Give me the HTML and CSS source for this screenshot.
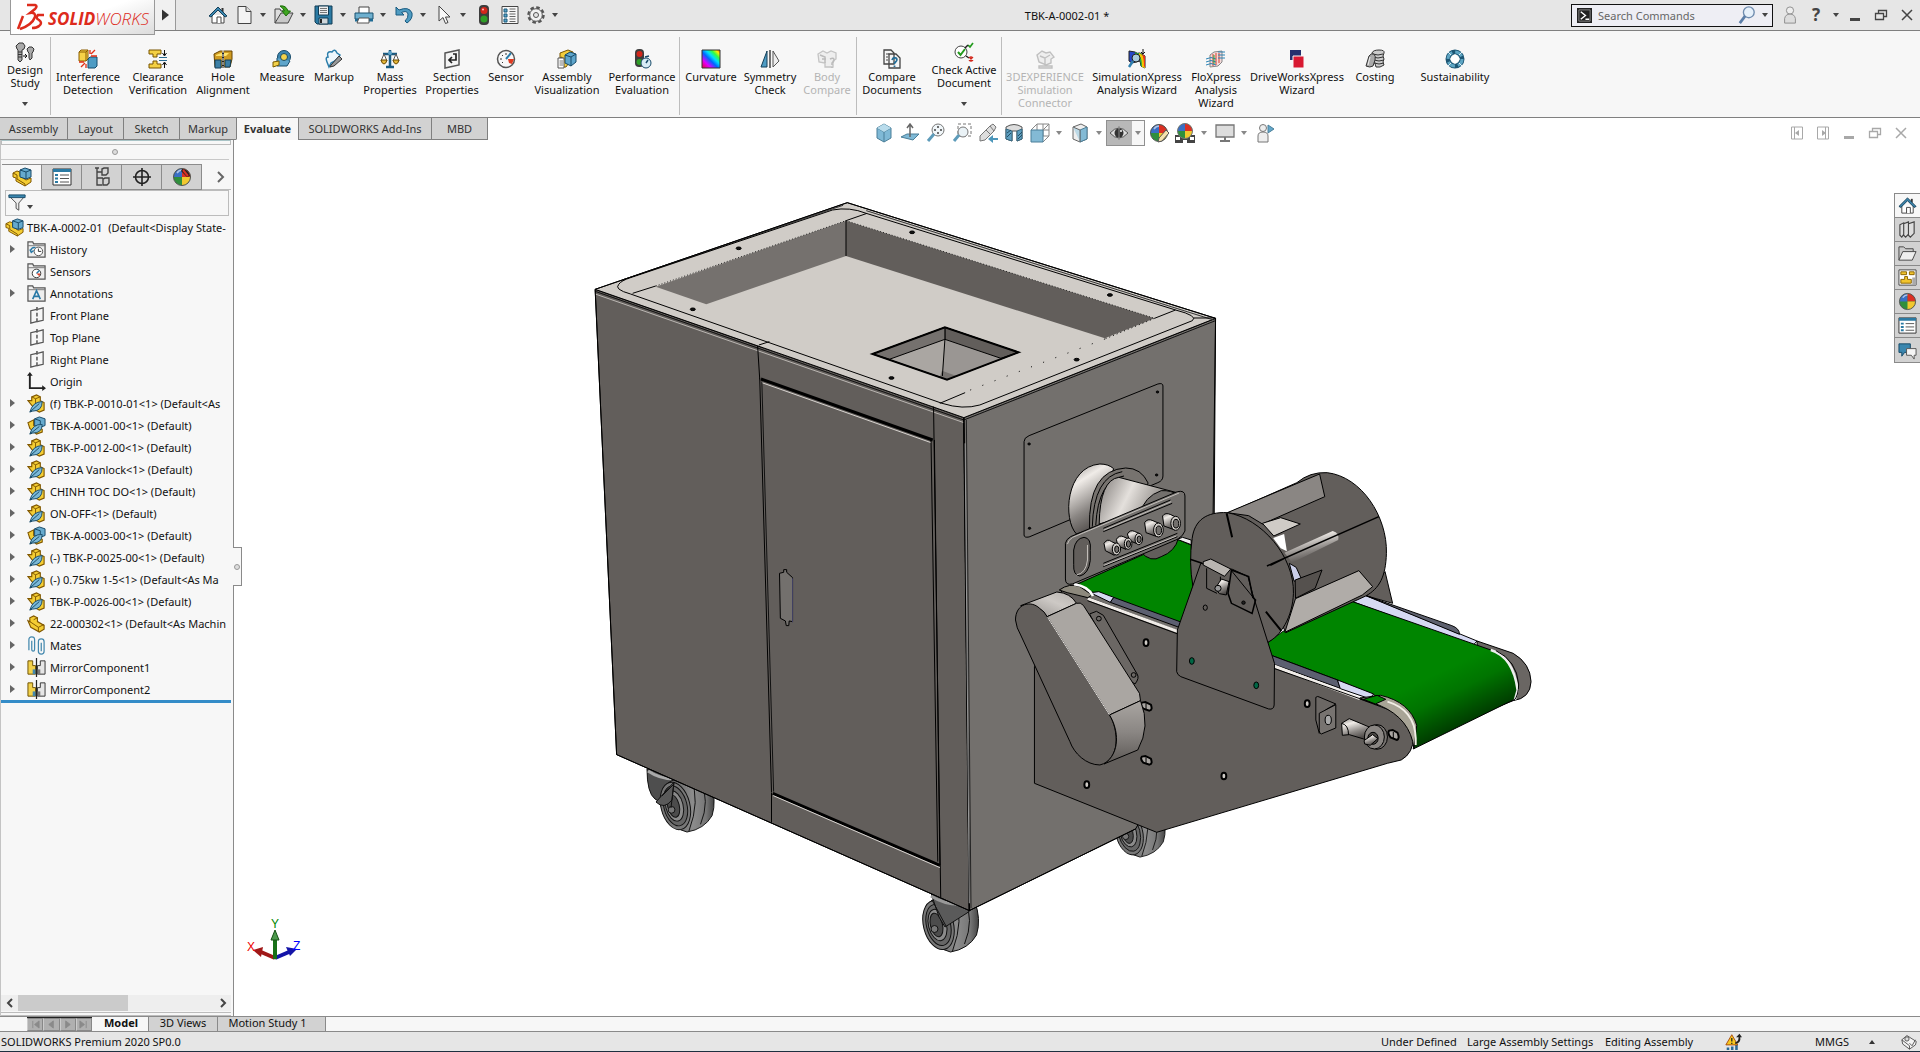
FILE: index.html
```html
<!DOCTYPE html>
<html lang="en">
<head>
<meta charset="utf-8">
<title>TBK-A-0002-01 - SOLIDWORKS</title>
<link rel="stylesheet" href="styles.css">
</head>
<body>
<svg class="defs" aria-hidden="true">
<defs>
<linearGradient id="metal" x1="0" y1="0" x2="0.4" y2="1"><stop offset="0" stop-color="#8e8a87"/><stop offset=".3" stop-color="#f0ece8"/><stop offset=".7" stop-color="#8a8683"/><stop offset="1" stop-color="#504c4a"/></linearGradient>
<linearGradient id="metalh" x1="0" y1="0" x2="1" y2="0.3"><stop offset="0" stop-color="#7e7a77"/><stop offset=".45" stop-color="#e4e0dc"/><stop offset="1" stop-color="#77736f"/></linearGradient>
<linearGradient id="bend" x1="0" y1="0" x2="0" y2="1"><stop offset="0" stop-color="#aaa6a2"/><stop offset=".5" stop-color="#8a8683"/><stop offset="1" stop-color="#5c5855"/></linearGradient>
<linearGradient id="bendtop" x1="0" y1="1" x2="1" y2="0"><stop offset="0" stop-color="#8f8b88"/><stop offset=".6" stop-color="#cdc9c5"/><stop offset="1" stop-color="#b5b1ad"/></linearGradient>
<linearGradient id="beltg" gradientUnits="userSpaceOnUse" x1="1270" y1="640" x2="1350" y2="800"><stop offset="0" stop-color="#008500"/><stop offset=".4" stop-color="#007400"/><stop offset="1" stop-color="#003800"/></linearGradient>
<linearGradient id="tyre"><stop offset="0" stop-color="#4b4b4b"/><stop offset=".6" stop-color="#8c8c8c"/><stop offset=".85" stop-color="#767676"/><stop offset="1" stop-color="#444"/></linearGradient>
<linearGradient id="rainbow" x1="0" y1="1" x2="1" y2="0"><stop offset="0" stop-color="#e03"/><stop offset=".25" stop-color="#d0f"/><stop offset=".45" stop-color="#06f"/><stop offset=".6" stop-color="#0df"/><stop offset=".75" stop-color="#3f4"/><stop offset=".88" stop-color="#fe0"/><stop offset="1" stop-color="#f40"/></linearGradient>
</defs>
<symbol id="home" viewBox="0 0 20 20"><path d="M4 10v8h12v-8" fill="#fff" stroke="#444"/><path d="M9 18v-6h4v6" fill="#fff" stroke="#444"/><path d="M14.500 3v4" stroke="#333" stroke-width="2"/><path d="M1 11l9-9 9 9-2 1-7-7-7 7z" fill="#3a86ae" stroke="#153f58"/></symbol>
<symbol id="new" viewBox="0 0 20 20"><path d="M4 1.500h8l5 5v12H4z" fill="#f4f4f4" stroke="#444"/><path d="M12 1.500v5h5" fill="#ddd" stroke="#444"/></symbol>
<symbol id="open" viewBox="0 0 20 20"><path d="M1 18V4h5l1 2h7v3" fill="#ddd" stroke="#444"/><path d="M1 18L7 8h12l-5 10z" fill="#c9c9c9" stroke="#444"/><path d="M6 1q6-1 8 5h2.500L12 11 8 6h2.500Q9 3 6 1z" fill="#3fa520" stroke="#1d6d0c"/></symbol>
<symbol id="save" viewBox="0 0 20 20"><path d="M1 1h17v18H3l-2-2z" fill="#2b7aa3" stroke="#123c55"/><path d="M4.500 1h10v9h-10z" fill="#eee" stroke="#123c55"/><path d="M6 3.500h7M6 5.500h7M6 7.500h7" stroke="#777"/><path d="M5 13h9v6H5z" fill="#cfd6da" stroke="#123c55"/><path d="M7 14v4" stroke="#222" stroke-width="2"/></symbol>
<symbol id="print" viewBox="0 0 20 20"><path d="M5 8V2h10v6" fill="#fff" stroke="#444"/><path d="M1 8h18v6H1z" fill="#6fb0cf" stroke="#1b5370"/><path d="M1 14h18v2.500H1z" fill="#1f6b94"/><path d="M5 13h10v5H3z" fill="#fff" stroke="#555"/></symbol>
<symbol id="undo" viewBox="0 0 20 20"><path d="M2 2v8h8L7.500 7.500Q13 5 14 9q.5 4-3 7l2 2q6-4 5-10Q15 1 5 5z" fill="#4f9cc2" stroke="#185a80"/></symbol>
<symbol id="cursor" viewBox="0 0 20 20"><path d="M5 1v15l4-3.500 2.500 6 2.500-1L11.500 12H16z" fill="#f8f8f8" stroke="#444"/></symbol>
<symbol id="traffic" viewBox="0 0 20 20"><rect x="5" y="0" width="10" height="20" rx="4" fill="#3d3d3d"/><circle cx="10" cy="5.500" r="3.500" fill="#d3271b"/><circle cx="10" cy="14" r="3.500" fill="#2f9e27"/><circle cx="9" cy="4.500" r="1" fill="#fbb"/></symbol>
<symbol id="list" viewBox="0 0 20 20"><path d="M2 1.500h16v17H2z" fill="#f7f7f7" stroke="#444"/><path d="M4 4h3v3H4zM4 9h3v3H4zM4 14h3v3H4z" fill="#5ba5c8" stroke="#1b5a7d"/><path d="M9.500 4h6M9.500 6.500h6M9.500 9h6M9.500 11.500h6M9.500 14h6M9.500 16.500h6" stroke="#666"/></symbol>
<symbol id="gear" viewBox="0 0 20 20"><circle cx="10" cy="10" r="7.500" fill="none" stroke="#555" stroke-width="2.500" stroke-dasharray="3.500 2.390"/><circle cx="10" cy="10" r="6.300" fill="#f2f2f2" stroke="#555"/><circle cx="10" cy="10" r="2.500" fill="#e6e6e6" stroke="#555"/></symbol>
<symbol id="screws" viewBox="0 0 20 20"><path d="M1 4l3-3h4l2 3-1 3-2 1v10l-2 2-2-2V8L2 7z" fill="#aaa" stroke="#333"/><path d="M3 10h4M3 12.500h4M3 15h4" stroke="#333"/><path d="M12 7l2-2h3l2 2-1 3-1 1v5l-2 2-1-2v-5l-1-1z" fill="#aaa" stroke="#333"/><path d="M8 14h4m-2-2l2 2-2 2" stroke="#111" fill="none"/></symbol>
<symbol id="interference" viewBox="0 0 20 20"><path d="M1 3l2-2h7v9l-2 2H1z" fill="#f6d348" stroke="#8a5d00"/><path d="M10 10l2-2h7v9l-2 2h-7z" fill="#4e9cc4" stroke="#144d6d"/><path d="M1 3h7v9M8 3l2-2" fill="none" stroke="#8a5d00"/><path d="M12 5V1M13 5l4-4M13 7h6M7 14l-4 4M8 15v4M6 13H1" stroke="#e22d12" stroke-width="1.300"/></symbol>
<symbol id="clearance" viewBox="0 0 20 20"><path d="M1 1h12v4H9v3H5V5H1zM1 19h12v-4H9v-3H5v3H1z" fill="#f4d044" stroke="#795500"/><path d="M11 8.500h8M11 11.500h8" stroke="#2a6c92"/><path d="M16.500 1v5m-2-2l2 3 2-3M16.500 19v-5m-2 2l2-3 2 3" stroke="#111" fill="none"/></symbol>
<symbol id="hole" viewBox="0 0 20 20"><path d="M1 5l6-3h12v8L17 18H2z" fill="#cf9b22" stroke="#694500"/><path d="M3 6l5-2h8l-3 3H3z" fill="#ffe36a"/><path d="M2 11h6v8H2zM12 11h6l-1 7h-5z" fill="#3c7fa5" stroke="#143f58"/><path d="M10 3v16" stroke="#222" stroke-width="2"/><path d="M10 1v18" stroke="#eee" stroke-dasharray="3 1"/></symbol>
<symbol id="measure" viewBox="0 0 20 20"><circle cx="12" cy="8" r="6.500" fill="#3d86b0" stroke="#174a68"/><path d="M5 9v8h10l3-5" fill="#5ea5cb" stroke="#174a68"/><circle cx="12" cy="8" r="3.500" fill="#f3d24a" stroke="#174a68"/><path d="M1 13l6-1v4l-6 2z" fill="#f3d24a" stroke="#7a5a00"/></symbol>
<symbol id="markup" viewBox="0 0 20 20"><path d="M3 13q-2-5 1-5-2-6 4-5 3-4 5 1l3 2q-2 5-9 8l-2 4z" fill="#eef7fc" stroke="#2b7daa" stroke-width="1.500"/><path d="M7 16l8-9 3 3-8 7-4 1z" fill="#999" stroke="#333"/></symbol>
<symbol id="mass" viewBox="0 0 20 20"><path d="M10 1v16M3 5h14M6 18h8" stroke="#1b5b81" stroke-width="2.500"/><circle cx="10" cy="4" r="2" fill="#5ea5cb"/><path d="M4 5l-3 7h6zM16 5l-3 7h6z" fill="#fff" stroke="#555"/><path d="M1 11h6q-1 4-3 4t-3-4zM13 11h6q-1 4-3 4t-3-4z" fill="#e7b93a" stroke="#6b4a00"/></symbol>
<symbol id="section" viewBox="0 0 20 20"><path d="M3 4l14-3v15L3 19z" fill="#f4f4f4" stroke="#555" stroke-width="1.500"/><path d="M11 5h3v6H8M10 8l-3 3 3 3" fill="none" stroke="#222" stroke-width="1.700"/></symbol>
<symbol id="sensor" viewBox="0 0 20 20"><circle cx="10" cy="10" r="8.500" fill="#f7f7f7" stroke="#555" stroke-width="1.500"/><path d="M10 10l5-6" stroke="#2b7daa" stroke-width="2"/><path d="M12 10h6l-2 5-3-1z" fill="#e13a20"/><path d="M4 10h2M10 4v2M6 6l1 1M6 14l1-1" stroke="#333"/></symbol>
<symbol id="asmvis" viewBox="0 0 20 20"><path d="M3 4l8-3 5 2v5L9 18H5V8L3 9z" fill="#f2cd3c" stroke="#795500"/><path d="M8 6l5-3 6 2v8l-5 4-6-3z" fill="#5ea5cb" stroke="#174a68"/><path d="M8 6l6 2v9M14 8l5-3" fill="none" stroke="#174a68"/><path d="M1 9h6v10H1z" fill="#fff" stroke="#555"/><path d="M2.500 12H6M2.500 14H6M2.500 16H6" stroke="#777"/></symbol>
<symbol id="perf" viewBox="0 0 20 20"><rect x="3" y="0" width="9" height="18" rx="4" fill="#3d3d3d"/><circle cx="7.500" cy="5" r="3" fill="#d3271b"/><circle cx="7.500" cy="13" r="3" fill="#2f9e27"/><circle cx="14" cy="14" r="5" fill="#d8ecf6" stroke="#174a68"/><path d="M14 14l2-3M13 8l4-1" stroke="#174a68" stroke-width="1.500"/></symbol>
<symbol id="curv" viewBox="0 0 20 20"><path d="M1 1h18v18H1z" fill="url(#rainbow)" stroke="#333"/></symbol>
<symbol id="symm" viewBox="0 0 20 20"><path d="M7 2v16H1z" fill="#4e9cc4" stroke="#143f58"/><path d="M13 2l6 10-6 6z" fill="#eee" stroke="#555"/><path d="M10 1v18" stroke="#444" stroke-width="1.500"/></symbol>
<symbol id="bodycmp" viewBox="0 0 20 20"><path d="M1 5l5-3 4 2 4-2 5 2v6l-3 2v6H8v-4L2 13z" fill="#eee" stroke="#c4c4c4" stroke-width="1.300"/><path d="M13 10q4-2 4 1 0 2-2 3v2M15 18v1M3 6l5 2v6M5 10h4" fill="none" stroke="#bbb" stroke-width="1.500"/></symbol>
<symbol id="compdoc" viewBox="0 0 20 20"><path d="M2 1h7l3 3v11H2zM7 5h7l4 4v10H7z" fill="#f5f5f5" stroke="#444" stroke-width="1.300"/><path d="M4 5h3M4 8h2M4 11h2" stroke="#444"/><path d="M10 11q1-3 4-2 2 2-.500 4l-1 1v1M12.500 16.500V18" stroke="#256f99" stroke-width="1.800" fill="none"/></symbol>
<symbol id="checkdoc" viewBox="0 0 20 20"><circle cx="7" cy="10" r="6" fill="#fff" stroke="#444"/><path d="M4 10l2.500 3L11 7" fill="none" stroke="#239b1d" stroke-width="2"/><path d="M14 3l2 2 3-4" fill="none" stroke="#239b1d" stroke-width="1.700"/><path d="M11 6l3-3M12 14l3 2" stroke="#222" stroke-width="1.500"/><path d="M15 15l4 4m0-4l-4 4m2-5v6" stroke="#d3271b" stroke-width="1.300"/></symbol>
<symbol id="connector" viewBox="0 0 20 20"><path d="M2 6l5-4 4 2 4-1 4 5-3 2v4l-5 2-7-3zM5 7l5 2v6M10 9l5-3M4 17h13v2H4z" fill="#eee" stroke="#c0c0c0" stroke-width="1.400"/></symbol>
<symbol id="simx" viewBox="0 0 20 20"><path d="M2 2l6 1q2 2 5 1l5 3v12l-4-2-1-5-8 2-3-2z" fill="#2546c8" stroke="#222"/><path d="M8 3q2 2 5 1 4 2 5 6v9l-4-2q0-8-6-9z" fill="#1fae3f"/><path d="M12 4q5 2 6 8v7l-3-1q0-9-3-12z" fill="#f5c400"/><path d="M15 5l3 2v11l-1-.500Q17 9 15 5z" fill="#e8351c"/><circle cx="9" cy="9" r="4" fill="#a9cbdc" stroke="#222"/><path d="M6 12l-4 6" stroke="#2f7fae" stroke-width="2.500"/><path d="M16 0v5m-2-2l2 2 2-2" stroke="#111" fill="none"/></symbol>
<symbol id="flo" viewBox="0 0 20 20"><path d="M4 6l4-3 8-1v11l-4 4-8 1z" fill="#f5dada" stroke="#888"/><path d="M7 5v12M10 4v12M13 4v10" stroke="#d8412d"/><path d="M0 10q5-3 10 0M0 13q5-3 10 0M0 16q5-3 10 0M12 3h7M12 6h7M12 9h7" stroke="#2b83b5" fill="none"/><path d="M8 6v9" stroke="#2aa43b"/></symbol>
<symbol id="drive" viewBox="0 0 20 20"><path d="M3 1h11v10H3z" fill="#23306e"/><path d="M6 7h11v12H6z" fill="#d81931" stroke="#f7f7f7"/></symbol>
<symbol id="cost" viewBox="0 0 20 20"><path d="M7 4q1-3 7-3t5 3l-1 3 1 3-1 3 1 3q-4 3-8 2z" fill="#ccc" stroke="#333"/><path d="M8 5q5 2 10 0M8 8q5 2 10 0M9 11q5 2 10 0M9 14q5 2 10 0" stroke="#333" fill="none"/><path d="M4 7q2-3 5-2 2 2 1 6l-2 6q-3 2-7 0z" fill="#aaa" stroke="#333"/><path d="M5 8l-2 8" stroke="#eee"/></symbol>
<symbol id="sustain" viewBox="0 0 20 20"><circle cx="10" cy="10" r="7" fill="none" stroke="#1d5674" stroke-width="5"/><circle cx="10" cy="10" r="7" fill="none" stroke="#5ea5c3" stroke-width="3" stroke-dasharray="8 3"/><path d="M10 5l5 5-5 5-5-5z" fill="#fff"/><path d="M3 3l3 3M17 3l-3 3M3 17l3-3M17 17l-3-3" stroke="#e6f2f7"/></symbol>
<symbol id="asm" viewBox="0 0 20 20"><path d="M1 6l4-2 3 1v4l6 4 5-2v4l-6 4-9-5v-3l-3-1z" fill="#f4cd33" stroke="#805700"/><path d="M1 6l4 2v4l8 5v2" fill="none" stroke="#805700"/><path d="M8 3l5-2 6 2v7l-5 2-6-2z" fill="#66aace" stroke="#174a68"/><path d="M8 3l6 2v7M14 5l5-2" fill="none" stroke="#174a68"/></symbol>
<symbol id="part" viewBox="0 0 20 20"><path d="M1 7l2 1V4l4-2 4 2v4l7 4v4l-5 3L4 14z" fill="#f4cd33" stroke="#805700" stroke-width="1.200"/><path d="M3 8l9 6 6-3M12 14v5M7 6l4-2" fill="none" stroke="#805700"/></symbol>
<symbol id="lwpart" viewBox="0 0 20 20"><path d="M1 7h4V3l5-2 4 2v4l4 2v8l-5 2-4-2z" fill="#f4cd33" stroke="#805700" stroke-width="1.200"/><path d="M5 3l4 2 5-2M9 5v5" stroke="#805700" fill="none"/><path d="M3 19Q6 8 16 8q0 10-10 10z" fill="#7ab8d6" stroke="#174a68"/><path d="M3 19L13 10" stroke="#174a68"/></symbol>
<symbol id="lwasm" viewBox="0 0 20 20"><path d="M1 7l6-3v6l9 4v3l-6 2-7-6z" fill="#f4cd33" stroke="#805700" stroke-width="1.200"/><path d="M8 3l5-2 6 2v7l-5 2-6-2z" fill="#66aace" stroke="#174a68"/><path d="M8 3l6 2v7" fill="none" stroke="#174a68"/><path d="M3 19Q6 8 16 9q0 9-10 9z" fill="#7ab8d6" stroke="#174a68"/><path d="M3 19L13 11" stroke="#174a68"/></symbol>
<symbol id="folder" viewBox="0 0 20 20"><path d="M1 18V2h5l1 2h12v14z" fill="#eee" stroke="#555" stroke-width="1.300"/><path d="M1 6h18" stroke="#777"/></symbol>
<symbol id="history" viewBox="0 0 20 20"><use href="#folder"/><circle cx="12" cy="12" r="4.500" fill="#fff" stroke="#555"/><path d="M12 9v3h3" stroke="#333" fill="none"/><path d="M4 11q1-4 5-3M3 10l1.500 3L7 11" stroke="#2878a5" stroke-width="1.500" fill="none"/></symbol>
<symbol id="sensors" viewBox="0 0 20 20"><use href="#folder"/><circle cx="10" cy="12" r="4.500" fill="#fff" stroke="#333"/><path d="M10 12l3-3" stroke="#2878a5" stroke-width="1.500"/><path d="M10 12h4l-1 3z" fill="#e13a20"/></symbol>
<symbol id="annot" viewBox="0 0 20 20"><use href="#folder"/><path d="M6 16l4-9 4 9M7.500 13h5" stroke="#2878a5" stroke-width="1.700" fill="none"/></symbol>
<symbol id="plane" viewBox="0 0 20 20"><path d="M8 4L4 5v13l4-1M13 3l4-1v13l-4 1M8 4l2-.500M13 3l-2 .500M8 17l2-.500M13 16l-2 .500" fill="none" stroke="#555" stroke-width="1.300"/><path d="M10.500 1v18" stroke="#333" stroke-dasharray="4 2" stroke-width="1.300"/></symbol>
<symbol id="origin" viewBox="0 0 20 20"><path d="M3 2v15h15" fill="none" stroke="#222" stroke-width="2"/><path d="M3 0l3 4H0zM20 17l-4-3v6z" fill="#222"/></symbol>
<symbol id="mates" viewBox="0 0 20 20"><path d="M2 15V4q0-3 3-3t3 3v10q0 2-1.500 2T5 14V5" fill="none" stroke="#4388ad" stroke-width="1.300"/><path d="M12 17V6q0-3 3-3t3 3v10q0 3-3 3t-3-3M15 16V7" fill="none" stroke="#4388ad" stroke-width="1.300"/></symbol>
<symbol id="mirror" viewBox="0 0 20 20"><path d="M1 3h5v5h3v9H1z" fill="#f2d14b" stroke="#6d5000"/><path d="M19 3h-5v5h-3v9h8z" fill="#e6e6e6" stroke="#333"/><path d="M6 12h3v5H6z" fill="#4388ad"/><path d="M11 12h3v5h-3z" fill="#777"/><path d="M10 0v20" stroke="#222" stroke-width="1.300"/></symbol>
<symbol id="props" viewBox="0 0 20 20"><path d="M1 2h18v16H1z" fill="#fff" stroke="#333"/><path d="M1 2h18v3H1z" fill="#2b7aa3"/><path d="M3 7h3v2H3zM3 10.500h3v2H3zM3 14h3v2H3z" fill="#2b7aa3"/><path d="M8 8h9M8 11.500h9M8 15h9" stroke="#555"/></symbol>
<symbol id="config" viewBox="0 0 20 20"><path d="M5 1v17h5M3 1h4M5 5h5M5 11h6M10 2l2-1h4v5l-2 2h-4zM11 12l2-1h4v5l-2 2h-4z" fill="none" stroke="#444" stroke-width="1.400"/></symbol>
<symbol id="target" viewBox="0 0 20 20"><circle cx="10" cy="10" r="6.500" fill="none" stroke="#222" stroke-width="1.600"/><path d="M10 1v18M1 10h18" stroke="#222" stroke-width="1.600"/></symbol>
<symbol id="ball" viewBox="0 0 20 20"><circle cx="10" cy="10" r="8.500" fill="#2f8f3c"/><path d="M10 10V1.500A8.500 8.500 0 0 0 1.500 10z" fill="#3a6fc4"/><path d="M10 10V1.500A8.500 8.500 0 0 1 18.500 10z" fill="#dc3023"/><path d="M10 10h8.500A8.500 8.500 0 0 1 10 18.500z" fill="#f1c82e"/><circle cx="10" cy="10" r="8.500" fill="none" stroke="#555"/><path d="M5 6q2-3 5-3" stroke="#fff" stroke-width="1.500" fill="none" opacity=".6"/></symbol>
<symbol id="appmgr" viewBox="0 0 20 20"><use href="#ball"/><path d="M10 2q6 0 8 7l-3 1-6-6z" fill="#222"/><path d="M11 3l5 6" stroke="#dc3023" stroke-width="2"/></symbol>
<symbol id="filter" viewBox="0 0 20 20"><path d="M1 2h18l-7 8v8l-3-2v-6z" fill="#eee" stroke="#444"/><path d="M1 1h18v3H1z" fill="#3a86ae" stroke="#174a68"/></symbol>
<symbol id="cube" viewBox="0 0 20 20"><path d="M3 5l7-4 7 4v10l-7 4-7-4z" fill="#7fb9d6" stroke="#4b7f99"/><path d="M3 5l7 4 7-4M10 9v10" fill="none" stroke="#4b7f99"/><path d="M3 5l7-4 7 4-7 4z" fill="#b9dcec"/></symbol>
<symbol id="normal" viewBox="0 0 20 20"><path d="M1 14l6-3h12l-6 6z" fill="#7fb9d6" stroke="#4b7f99"/><path d="M10 14V2M7 5l3-4 3 4" fill="none" stroke="#666" stroke-width="1.500"/></symbol>
<symbol id="zoom" viewBox="0 0 20 20"><circle cx="12" cy="7" r="6" fill="#f0f6f9" stroke="#777"/><path d="M8 11l-6 7" stroke="#5e9cba" stroke-width="3"/><path d="M12 3v2M12 9v2M8 7h2M14 7h2" stroke="#444" stroke-width="1.500"/></symbol>
<symbol id="zoomarea" viewBox="0 0 20 20"><path d="M6 1h13v12H6z" fill="none" stroke="#777" stroke-dasharray="3 2"/><circle cx="11" cy="9" r="5" fill="#eaf2f6" stroke="#777"/><path d="M7 12l-5 6" stroke="#5e9cba" stroke-width="3"/></symbol>
<symbol id="prev" viewBox="0 0 20 20"><path d="M2 13l10-10 3-2 3 3-2 4-9 9-5 1z" fill="#ddd" stroke="#777"/><path d="M8 7l5 5M12 3l4 5" stroke="#777"/><path d="M20 15h-5v-3l-5 4 5 4v-3h5z" fill="#4d97bb"/></symbol>
<symbol id="sectionv" viewBox="0 0 20 20"><path d="M2 4q8-5 16 0v12l-5 2V8H8v10l-6-2z" fill="#ddd" stroke="#555"/><path d="M2 6l6 2v10l-6-2zM13 8l5-2v10l-5 2z" fill="#5d9fc0" stroke="#37677f"/><path d="M3 10l4-3M3 14l4-4M14 13l4-4M14 16l4-4" stroke="#244e64"/></symbol>
<symbol id="orient" viewBox="0 0 20 20"><path d="M7 1h12v12M13 1v12h6M7 7V1M1 7l6-6M19 1l-6 6M13 7h6M13 19l6-6" fill="none" stroke="#888"/><path d="M1 7h12v12H1z" fill="#83bad5" stroke="#4b7f99"/></symbol>
<symbol id="dispstyle" viewBox="0 0 20 20"><path d="M3 4l8-3 6 3v12l-7 3-7-3z" fill="#eee" stroke="#666"/><path d="M10 7l7-3v12l-7 3z" fill="#83bad5" stroke="#4b7f99"/><path d="M3 4l7 3v12" fill="#bcd9e6" stroke="#666"/></symbol>
<symbol id="eye" viewBox="0 0 20 20"><path d="M1 10q9-10 18 0-9 10-18 0z" fill="#ddd" stroke="#555"/><circle cx="10" cy="10" r="4.500" fill="#333"/><path d="M10 3v14" stroke="#888"/><circle cx="12" cy="8" r="1" fill="#fff"/></symbol>
<symbol id="appear" viewBox="0 0 20 20"><use href="#ball"/><path d="M9 19l1-4 7-8 3 3-7 8z" fill="#f5e2ae" stroke="#555"/></symbol>
<symbol id="scene" viewBox="0 0 20 20"><path d="M0 12h20v8H0z" fill="#444"/><path d="M1 14h4v3H1zM8 17h4v3H8zM15 14h4v3h-4z" fill="#fff"/><circle cx="10" cy="8" r="7.500" fill="#2f8f3c"/><path d="M10 8V.500A7.500 7.500 0 0 0 2.500 8z" fill="#3a6fc4"/><path d="M10 8V.500A7.500 7.500 0 0 1 17.500 8z" fill="#dc3023"/><path d="M10 8h7.500a7.500 7.500 0 0 1-7.500 7.500z" fill="#f1c82e"/><circle cx="10" cy="8" r="7.500" fill="none" stroke="#777"/></symbol>
<symbol id="monitor" viewBox="0 0 20 20"><path d="M1 2h18v12H1z" fill="#ddd" stroke="#777" stroke-width="1.300"/><path d="M10 14v4M5 18h10" stroke="#777" stroke-width="2"/></symbol>
<symbol id="userv" viewBox="0 0 20 20"><circle cx="8" cy="5" r="3.500" fill="#eee" stroke="#777"/><path d="M3 19v-6q0-4 5-4t5 4v6z" fill="#eee" stroke="#777"/><path d="M13 2l6 4-6 4z" fill="#64a8cb" stroke="#4b7f99"/></symbol>
<symbol id="books" viewBox="0 0 20 20"><path d="M2 5l4-2v12l-2 3-2-2zM6 4l5-2v13l-3 3-2-2zM11 4l6-2v12l-4 4-2-2z" fill="#ddd" stroke="#444" stroke-width="1.200"/></symbol>
<symbol id="dir" viewBox="0 0 20 20"><path d="M1 17V3h5l2 2h8v3" fill="#ccc" stroke="#444"/><path d="M1 17L5 8h14l-4 9z" fill="#eee" stroke="#444"/></symbol>
<symbol id="palette" viewBox="0 0 20 20"><path d="M1 2h18v16H1z" fill="#fff" stroke="#444"/><path d="M3 4h6v3H3zM12 4h5v3h-5zM7 9h3v3h4v4H3v-4h4z" fill="#f2c52e" stroke="#8a6300"/><path d="M15 10h4v8h-4z" fill="#aaa"/></symbol>
<symbol id="chat" viewBox="0 0 20 20"><path d="M1 3h12v9H7l-3 4v-4H1z" fill="#3a86ae" stroke="#174a68"/><path d="M9 8h10v7h-2v4l-3-4H9z" fill="#f5f5f5" stroke="#555"/></symbol>
<symbol id="caret" viewBox="0 0 6 4"><path d="M0 0h6L3 4z" fill="currentColor"/></symbol>
<symbol id="tri" viewBox="0 0 5 8"><path d="M0 0l5 4-5 4z" fill="#666"/></symbol>
<symbol id="man" viewBox="0 0 20 20"><circle cx="10" cy="5" r="4" fill="#eee" stroke="#888"/><path d="M4 19v-5q1-5 6-5t6 5v5z" fill="#ddd" stroke="#888"/></symbol>
<symbol id="magnify" viewBox="0 0 20 20"><circle cx="12" cy="7" r="6" fill="#e6f0fa" stroke="#6f8cae" stroke-width="1.500"/><path d="M8 11l-6 8" stroke="#5b7ea8" stroke-width="3"/></symbol>
<symbol id="min" viewBox="0 0 14 14"><path d="M2 10h10v3H2z" fill="currentColor"/></symbol>
<symbol id="restore" viewBox="0 0 14 14"><path d="M4.500 5V2.500h8v6H10M1.500 5.500h8v6h-8z" fill="none" stroke="currentColor" stroke-width="1.300"/></symbol>
<symbol id="close" viewBox="0 0 14 14"><path d="M2 2l10 10M12 2L2 12" stroke="currentColor" stroke-width="1.500"/></symbol>
<symbol id="dockl" viewBox="0 0 14 14"><path d="M1.500 1h11v12h-11zM4.500 1v12" fill="none" stroke="currentColor"/><path d="M9 4v6L5 7z" fill="currentColor"/></symbol>
<symbol id="dockr" viewBox="0 0 14 14"><path d="M1.500 1h11v12h-11zM9.500 1v12" fill="none" stroke="currentColor"/><path d="M6 4v6l4-3z" fill="currentColor"/></symbol>
<symbol id="rebuild" viewBox="0 0 20 20"><path d="M2 17h3v3H2zM7 16h3v4H7zM12 14h3v6h-3z" fill="#2b6a96"/><path d="M8 2l7 12H1z" fill="#f6c81e" stroke="#a03a00"/><path d="M8 6v4M8 11.500V13" stroke="#222" stroke-width="1.500"/><path d="M12 11q4-1 4-6h-3l4-4 3 4h-2q1 7-6 8z" fill="#222"/></symbol>
<symbol id="tag" viewBox="0 0 20 20"><path d="M1 8l6-5 11 7-1 4-7 5-8-6z" fill="#f3f3f3" stroke="#444"/><circle cx="7" cy="7" r="2.500" fill="#ddd" stroke="#444"/><path d="M10 12l3 3 4-7M1 8l9 7v4" stroke="#444" fill="none"/></symbol>
<symbol id="wheel" viewBox="0 0 60 58"><path d="M18 2Q42-2 54 6q7 18 2 34-8 14-26 17Q8 52 3 30 0 8 18 2z" fill="url(#tyre)" stroke="#111"/><path d="M34 2q10 22-2 54M44 3q10 22 0 46" fill="none" stroke="#111"/><ellipse cx="18" cy="30" rx="15" ry="25" transform="rotate(-14 18 30)" fill="#777" stroke="#111"/><ellipse cx="18" cy="30" rx="12" ry="21" transform="rotate(-14 18 30)" fill="#666" stroke="#111"/><ellipse cx="17" cy="30" rx="9" ry="16" transform="rotate(-14 17 30)" fill="#8b8b8b" stroke="#111"/><ellipse cx="16" cy="30" rx="6" ry="12" transform="rotate(-14 16 30)" fill="#4c4c4c" stroke="#111"/><circle cx="14" cy="34" r="3.500" fill="#777" stroke="#111"/></symbol>
</svg>

<header class="titlebar">
  <div class="logo">
    <svg class="logo-mark" viewBox="0 0 30 28"><path d="M12 2h8q3 1 0 4l-5 4q6-1 5 4-3 8-15 12" fill="none" stroke="#dd2b1c" stroke-width="2.500"/><path d="M8 13L3 26" stroke="#dd2b1c" stroke-width="2.500"/><path d="M29 12h-6q-3 3 1 5 4 3 0 6-2 2-7 2" fill="none" stroke="#dd2b1c" stroke-width="2.500"/></svg>
    <span class="logo-text"><b>SOLID</b>WORKS</span>
  </div>
  <button class="flyout" aria-label="Expand menu"><svg viewBox="0 0 5 8"><path d="M0 0l5 4-5 4z" fill="#333"/></svg></button>
  <nav class="qat">
    <button aria-label="Home"><svg><use href="#home"/></svg></button>
    <button class="drop" aria-label="New"><svg><use href="#new"/></svg><svg class="car"><use href="#caret"/></svg></button>
    <button class="drop" aria-label="Open"><svg><use href="#open"/></svg><svg class="car"><use href="#caret"/></svg></button>
    <button class="drop" aria-label="Save"><svg><use href="#save"/></svg><svg class="car"><use href="#caret"/></svg></button>
    <button class="drop" aria-label="Print"><svg><use href="#print"/></svg><svg class="car"><use href="#caret"/></svg></button>
    <button class="drop" aria-label="Undo"><svg><use href="#undo"/></svg><svg class="car"><use href="#caret"/></svg></button>
    <button class="drop" aria-label="Select"><svg><use href="#cursor"/></svg><svg class="car"><use href="#caret"/></svg></button>
    <button aria-label="Rebuild"><svg><use href="#traffic"/></svg></button>
    <button aria-label="File properties"><svg><use href="#list"/></svg></button>
    <button class="drop" aria-label="Options"><svg><use href="#gear"/></svg><svg class="car"><use href="#caret"/></svg></button>
  </nav>
  <h1 class="doc-title">TBK-A-0002-01 *</h1>
  <div class="search">
    <svg class="prompt" viewBox="0 0 16 16"><path d="M0 0h16v16H0z" fill="#222"/><path d="M2 2h12v12H2z" fill="none" stroke="#888"/><path d="M4 4l5 4-5 4M9 12h4" fill="none" stroke="#fff" stroke-width="1.500"/></svg>
    <input type="text" placeholder="Search Commands" aria-label="Search Commands">
    <button aria-label="Search"><svg><use href="#magnify"/></svg><svg class="car"><use href="#caret"/></svg></button>
  </div>
  <div class="winbtns">
    <button aria-label="Account"><svg><use href="#man"/></svg></button>
    <button class="help" aria-label="Help">?</button>
    <button class="tiny" aria-label="Help menu"><svg class="car"><use href="#caret"/></svg></button>
    <button aria-label="Minimize"><svg class="w"><use href="#min"/></svg></button>
    <button aria-label="Restore"><svg class="w"><use href="#restore"/></svg></button>
    <button aria-label="Close"><svg class="w"><use href="#close"/></svg></button>
  </div>
</header>

<section class="ribbon">
  <div class="group g1">
    <button class="tall"><svg><use href="#screws"/></svg><span>Design<br>Study</span><svg class="car"><use href="#caret"/></svg></button>
  </div>
  <div class="group g2">
    <button><svg><use href="#interference"/></svg><span>Interference<br>Detection</span></button>
    <button><svg><use href="#clearance"/></svg><span>Clearance<br>Verification</span></button>
    <button><svg><use href="#hole"/></svg><span>Hole<br>Alignment</span></button>
    <button><svg><use href="#measure"/></svg><span>Measure</span></button>
    <button><svg><use href="#markup"/></svg><span>Markup</span></button>
    <button><svg><use href="#mass"/></svg><span>Mass<br>Properties</span></button>
    <button><svg><use href="#section"/></svg><span>Section<br>Properties</span></button>
    <button><svg><use href="#sensor"/></svg><span>Sensor</span></button>
    <button><svg><use href="#asmvis"/></svg><span>Assembly<br>Visualization</span></button>
    <button><svg><use href="#perf"/></svg><span>Performance<br>Evaluation</span></button>
  </div>
  <div class="group g3">
    <button><svg><use href="#curv"/></svg><span>Curvature</span></button>
    <button><svg><use href="#symm"/></svg><span>Symmetry<br>Check</span></button>
    <button disabled><svg><use href="#bodycmp"/></svg><span>Body<br>Compare</span></button>
  </div>
  <div class="group g4">
    <button><svg><use href="#compdoc"/></svg><span>Compare<br>Documents</span></button>
    <button class="tall"><svg><use href="#checkdoc"/></svg><span>Check Active<br>Document</span><svg class="car"><use href="#caret"/></svg></button>
  </div>
  <div class="group g5">
    <button disabled><svg><use href="#connector"/></svg><span>3DEXPERIENCE<br>Simulation<br>Connector</span></button>
    <button><svg><use href="#simx"/></svg><span>SimulationXpress<br>Analysis Wizard</span></button>
    <button><svg><use href="#flo"/></svg><span>FloXpress<br>Analysis<br>Wizard</span></button>
    <button><svg><use href="#drive"/></svg><span>DriveWorksXpress<br>Wizard</span></button>
    <button><svg><use href="#cost"/></svg><span>Costing</span></button>
    <button><svg><use href="#sustain"/></svg><span>Sustainability</span></button>
  </div>
</section>

<div class="tabrow">
  <nav class="tabs">
    <button>Assembly</button><button>Layout</button><button>Sketch</button><button>Markup</button><button class="on">Evaluate</button><button>SOLIDWORKS Add-Ins</button><button>MBD</button>
  </nav>
  <div class="hud">
    <button aria-label="View cube"><svg><use href="#cube"/></svg></button>
    <button aria-label="Normal to"><svg><use href="#normal"/></svg></button>
    <button aria-label="Zoom to fit"><svg><use href="#zoom"/></svg></button>
    <button aria-label="Zoom to area"><svg><use href="#zoomarea"/></svg></button>
    <button aria-label="Previous view"><svg><use href="#prev"/></svg></button>
    <button aria-label="Section view"><svg><use href="#sectionv"/></svg></button>
    <button class="drop" aria-label="View orientation"><svg><use href="#orient"/></svg><svg class="car"><use href="#caret"/></svg></button>
    <button class="drop" aria-label="Display style"><svg><use href="#dispstyle"/></svg><svg class="car"><use href="#caret"/></svg></button>
    <button class="pressed" aria-label="Hide/show items"><svg><use href="#eye"/></svg><span><svg class="car"><use href="#caret"/></svg></span></button>
    <button aria-label="Edit appearance"><svg><use href="#appear"/></svg></button>
    <button class="drop" aria-label="Apply scene"><svg><use href="#scene"/></svg><svg class="car"><use href="#caret"/></svg></button>
    <button class="drop" aria-label="View settings"><svg><use href="#monitor"/></svg><svg class="car"><use href="#caret"/></svg></button>
    <button aria-label="Cameras"><svg><use href="#userv"/></svg></button>
  </div>
  <div class="docbtns">
    <button aria-label="Dock left"><svg><use href="#dockl"/></svg></button>
    <button aria-label="Dock right"><svg><use href="#dockr"/></svg></button>
    <button aria-label="Minimize document"><svg><use href="#min"/></svg></button>
    <button aria-label="Restore document"><svg><use href="#restore"/></svg></button>
    <button aria-label="Close document"><svg><use href="#close"/></svg></button>
  </div>
</div>

<main class="work">
  <aside class="panel">
    <div class="panel-top"></div>
    <div class="grip"><i></i></div>
    <div class="ptabs">
      <button class="on" aria-label="Feature tree"><svg><use href="#asm"/></svg></button>
      <button aria-label="Properties"><svg><use href="#props"/></svg></button>
      <button aria-label="Configurations"><svg><use href="#config"/></svg></button>
      <button aria-label="DimXpert"><svg><use href="#target"/></svg></button>
      <button aria-label="Appearances"><svg><use href="#appmgr"/></svg></button>
      <button class="more" aria-label="More tabs"><svg viewBox="0 0 8 12"><path d="M1 1l5 5-5 5" fill="none" stroke="#666" stroke-width="2"/></svg></button>
    </div>
    <button class="filter" aria-label="Filter"><svg><use href="#filter"/></svg><svg class="car"><use href="#caret"/></svg></button>
    <ul class="tree">
      <li class="root"><svg class="ic"><use href="#asm"/></svg><span>TBK-A-0002-01&nbsp; (Default&lt;Display State-</span></li>
      <li><svg class="ex"><use href="#tri"/></svg><svg class="ic"><use href="#history"/></svg><span>History</span></li>
      <li><i class="ex"></i><svg class="ic"><use href="#sensors"/></svg><span>Sensors</span></li>
      <li><svg class="ex"><use href="#tri"/></svg><svg class="ic"><use href="#annot"/></svg><span>Annotations</span></li>
      <li><i class="ex"></i><svg class="ic"><use href="#plane"/></svg><span>Front Plane</span></li>
      <li><i class="ex"></i><svg class="ic"><use href="#plane"/></svg><span>Top Plane</span></li>
      <li><i class="ex"></i><svg class="ic"><use href="#plane"/></svg><span>Right Plane</span></li>
      <li><i class="ex"></i><svg class="ic"><use href="#origin"/></svg><span>Origin</span></li>
      <li><svg class="ex"><use href="#tri"/></svg><svg class="ic"><use href="#lwpart"/></svg><span>(f) TBK-P-0010-01&lt;1&gt; (Default&lt;As</span></li>
      <li><svg class="ex"><use href="#tri"/></svg><svg class="ic"><use href="#lwasm"/></svg><span>TBK-A-0001-00&lt;1&gt; (Default)</span></li>
      <li><svg class="ex"><use href="#tri"/></svg><svg class="ic"><use href="#lwpart"/></svg><span>TBK-P-0012-00&lt;1&gt; (Default)</span></li>
      <li><svg class="ex"><use href="#tri"/></svg><svg class="ic"><use href="#lwpart"/></svg><span>CP32A Vanlock&lt;1&gt; (Default)</span></li>
      <li><svg class="ex"><use href="#tri"/></svg><svg class="ic"><use href="#lwpart"/></svg><span>CHINH TOC DO&lt;1&gt; (Default)</span></li>
      <li><svg class="ex"><use href="#tri"/></svg><svg class="ic"><use href="#lwpart"/></svg><span>ON-OFF&lt;1&gt; (Default)</span></li>
      <li><svg class="ex"><use href="#tri"/></svg><svg class="ic"><use href="#lwasm"/></svg><span>TBK-A-0003-00&lt;1&gt; (Default)</span></li>
      <li><svg class="ex"><use href="#tri"/></svg><svg class="ic"><use href="#lwpart"/></svg><span>(-) TBK-P-0025-00&lt;1&gt; (Default)</span></li>
      <li><svg class="ex"><use href="#tri"/></svg><svg class="ic"><use href="#lwpart"/></svg><span>(-) 0.75kw 1-5&lt;1&gt; (Default&lt;As Ma</span></li>
      <li><svg class="ex"><use href="#tri"/></svg><svg class="ic"><use href="#lwpart"/></svg><span>TBK-P-0026-00&lt;1&gt; (Default)</span></li>
      <li><svg class="ex"><use href="#tri"/></svg><svg class="ic"><use href="#part"/></svg><span>22-000302&lt;1&gt; (Default&lt;As Machin</span></li>
      <li><svg class="ex"><use href="#tri"/></svg><svg class="ic"><use href="#mates"/></svg><span>Mates</span></li>
      <li><svg class="ex"><use href="#tri"/></svg><svg class="ic"><use href="#mirror"/></svg><span>MirrorComponent1</span></li>
      <li><svg class="ex"><use href="#tri"/></svg><svg class="ic"><use href="#mirror"/></svg><span>MirrorComponent2</span></li>
    </ul>
    <div class="rollback"></div>
    <div class="hscroll">
      <button aria-label="Scroll left"><svg viewBox="0 0 8 12"><path d="M6 2L2 6l4 4" fill="none" stroke="#444" stroke-width="2"/></svg></button>
      <div class="track"><div class="thumb"></div></div>
      <button aria-label="Scroll right"><svg viewBox="0 0 8 12"><path d="M2 2l4 4-4 4" fill="none" stroke="#444" stroke-width="2"/></svg></button>
    </div>
    <div class="panel-end"></div>
    <button class="splitter" aria-label="Collapse panel"><i></i></button>
  </aside>

  <section class="view">
    <svg class="scene" viewBox="234 140 1686 876" preserveAspectRatio="xMinYMin meet">
      <!-- casters -->
      <path d="M647 769q0 24 8 30 4 4 9 2l20-22v-6z" fill="#4e4e4e" stroke="#111"/>
      <path d="M648 771q12 8 26 8" stroke="#aaa" stroke-width="3" fill="none"/>
      <use href="#wheel" x="658" y="777" width="58" height="56"/>
      <path d="M674 782l-18 20q8 8 16-2zM674 782l-3 26M674 784l-12 12" stroke="#111" fill="#5a5a5a"/>
      <use href="#wheel" x="1111" y="806" width="58" height="52"/>
      <use href="#wheel" x="919" y="895" width="63" height="58"/>
      <path d="M931 893l50 8-14 12-22 14-6-10z" fill="#5a5a5a" stroke="#111"/><path d="M931 896q16 10 34 8" stroke="#999" stroke-width="3" fill="none"/><path d="M932 900l14 26" stroke="#111"/>
      <g class="cad" transform="translate(580 190) scale(.4209 .3333)">
        <!-- cabinet faces -->
        <path d="M36 298L912 683l13 1479L87 1694z" fill="#625e5b"/>
        <path d="M912 683l598-298-6 1115-184 417-395 245z" fill="#73706d"/>
        <path d="M36 298L635 38l875 347-598 298z" fill="#d0ccc7"/>
        <path d="M36 304L912 690 1510 392" stroke="#111"/>
        <path d="M36 312L912 698" stroke="#bbb7b3"/>
        <path d="M100 270L625 46M680 62l825 328" stroke="#333"/>
        <path d="M120 312Q80 298 92 283q6-11 28-20L600 60q40-10 80 10l735 290q55 18 40 32L950 645q-40 15-90-5z"/>
        <!-- recess -->
        <path d="M180 290L632 92v106L300 343z" fill="#75716e" stroke="none"/>
        <path d="M632 92l733 293-118 60-615-247z" fill="#625e5b" stroke="none"/>
        <path d="M632 90v108M125 310l55-22M632 92l50-22M1365 385l50-25M855 640l60-32M425 465l25-10M1458 384h50"/>
        <path d="M180 288L632 92l733 293" stroke="#222" stroke-dasharray="1 2"/>
        <path d="M1365 385l-118 62" stroke-dasharray="1 3"/><path d="M1247 447L915 606" stroke-dasharray="1 12"/>
        <g fill="#111"><ellipse cx="377" cy="175" rx="6" ry="4"/><ellipse cx="789" cy="127" rx="6" ry="4"/><ellipse cx="1259" cy="315" rx="6" ry="4"/><ellipse cx="1180" cy="509" rx="6" ry="4"/><ellipse cx="740" cy="564" rx="6" ry="4"/><ellipse cx="268" cy="358" rx="6" ry="4"/></g>
        <!-- chute opening -->
        <path d="M695 492l172-80 175 75-170 82z" fill="#aaa6a2"/>
        <path d="M867 448l133 57-128 64-12-9z" fill="#9a9693" stroke="none"/>
        <path d="M867 412l175 75-42 18-133-57z" fill="#625e5b"/>
        <path d="M867 412v36L735 508l-40-16z" fill="#75716e"/>
        <path d="M860 542l35 16-23 11-17-8z" fill="#777370" stroke="none"/>
        <path d="M867 448l-6 110"/><path d="M695 492l172-80 175 75-170 82z" stroke-width="2"/>
        <!-- door -->
        <path d="M36 298l51 1396 838 468 395-245M422 468l5 100M840 650l17 1472M455 1808v90"/>
        <path d="M912 683l13 1479" stroke-width="1.500"/><path d="M918 690l11 1465" stroke="#222"/><path d="M915 760l10 1380" stroke="#999"/>
        <path d="M430 567l408 183" stroke-width="3"/><path d="M432 578l402 180" stroke="#d8d4d0"/>
        <path d="M427 565l28 1242" /><path d="M432 575l28 1230" stroke="#111"/>
        <path d="M834 750l16 1265M842 750l13 1275"/>
        <path d="M458 1810l397 216" stroke-width="3"/><path d="M459 1817l396 216" stroke="#d8d4d0"/>
        <path d="M474 1150l10-3v-8h7v8l14 16v132l-8-2-1 14h-6l-2-14-12-8z" fill="#73706d"/>
        <path d="M505 1165v132" stroke="#446"/>
        <!-- cover plate -->
        <path d="M1055 755q0-12 12-18l306-155q12-4 12 6v270q0 14-12 20l-306 163q-12 3-12-6z"/>
        <g fill="#111"><circle cx="1372" cy="606" r="3"/><circle cx="1067" cy="762" r="3"/><circle cx="1370" cy="855" r="3"/><circle cx="1068" cy="1015" r="3"/></g>
        <path d="M1510 385l-6 600M36 298L635 38l875 347"/>
      </g>
      <g class="cad" transform="translate(1000 460) scale(.3444 .3333)">
        <!-- far side rail, belt and pulley -->
        <path d="M1118 335l22 95-85-25z" fill="#625e5b"/>
        <path d="M1385 543l105 37q50 30 52 85-2 50-52 57l-60 25-40-100z" fill="#6a6663"/>
        <path d="M1018 423l42-18 325 138-12 14z" fill="#d5d9f2"/>
        <path d="M1062 407l250 90q22 8 22 26z" fill="#5d606e"/>
        <path d="M225 372l290-134 40 17 5 125-35 110-260-95z" fill="#008500"/>
        <path d="M775 550l45-35 198-92 407 147q65 20 78 120-3 30-23 35l-280 142q15-67-20-107-30-35-70-45l-130-55-195-75z" fill="url(#beltg)"/>
        <path d="M1425 570q65 20 78 120l-8 30" stroke="#eee" stroke-width="2.500"/><path d="M1440 572q60 30 66 100 0 35-14 50"/>
        <!-- near side plate -->
        <path d="M100 620v350l355 147 670-207 40-10q35-20 36-70-5-50-70-80l-91-35-245-95-540-208L180 390z" fill="#625e5b"/>
        <path d="M330 412l195 74-5 16-200-75z" fill="#5c5f70"/><path d="M262 398l25-3 43 17-10 15z" fill="#d5d9f2"/>
        <path d="M785 585l195 75 8 25-193-72z" fill="#5c5f70"/><path d="M980 660l105 42-12 14-85-30z" fill="#d5d9f2"/>
        <path d="M255 416l260 98M795 618l250 98" stroke="#f0ece8" stroke-width="3"/>
        <path d="M254 422l262 100M795 625l310 113"/>
        <path d="M1045 714l60-8q85 20 105 90l-8 70q-10-90-100-130z" fill="#a8a496"/>
        <path d="M1125 725q80 25 82 110v20" stroke="#f2eee6" stroke-width="2"/>
        <path d="M1055 718l40-12 25 12-30 14z" fill="#008500"/>
        <path d="M172 390q30-22 60-10l35 25-12 8-60-15z" fill="#8d897d"/><path d="M215 373q40 5 55 35" stroke="#fff" stroke-width="2.500"/>
        <g fill="#d0ccc7" stroke-width="2"><ellipse cx="424" cy="548" rx="7" ry="10"/><ellipse cx="892" cy="731" rx="7" ry="10"/><ellipse cx="650" cy="948" rx="7" ry="10"/><ellipse cx="252" cy="974" rx="7" ry="10"/></g>
        <g fill="#aaa6a2" stroke-width="2"><path d="M412 728l10-2 16 8q6 16-4 18l-18-6q-10-12-4-18zM412 890l10-2 16 8q6 16-4 18l-18-6q-10-12-4-18zM1130 812l10-2 14 8q8 18-2 22l-18-8q-10-12-4-20z"/></g>
        <path d="M424 730v18M424 892v18M1142 816v20"/>
        <!-- tension bracket -->
        <path d="M917 712q5-5 12 0l46 20-30 18-18 70-10-40z" fill="#6b6764"/><path d="M927 760l48-26v70l-42 18q-6-2-6-10z" fill="#777370"/><ellipse cx="953" cy="780" rx="9" ry="14" fill="#aaa"/>
        <path d="M992 790l22-14 65 28-20 34-45-14-20 2z" fill="url(#metal)"/><path d="M992 790q20 5 20 34"/>
        <ellipse cx="1095" cy="831" rx="30" ry="37" fill="#777370"/><ellipse cx="1087" cy="831" rx="29" ry="36" fill="#8a8683"/><ellipse cx="1083" cy="835" rx="15" ry="18" fill="#4a4744"/><path d="M1057 842l25-18 15 12-22 20-16-4z" fill="url(#metal)"/>
        <!-- motor housing on the cabinet wall -->
        <path d="M222 222C182 180 190 20 290 12q25 0 40 14l-60 180z" fill="url(#metal)"/>
        <path d="M260 205Q255 30 365 24q45 0 65 45l-30 80-130 55z" fill="#77736f"/>
        <path d="M268 200Q272 50 355 35M278 196Q285 60 360 48" />
        <path d="M288 192Q290 60 345 52l165 45-100 60z" fill="url(#metalh)"/>
        <path d="M408 160q10-50 60-68 30-2 50 14-10 10-60 32z" fill="#73706d"/>
        <!-- button plate -->
        <path d="M408 275q30 35 60 15 40-15 50-55z" fill="#625e5b"/>
        <path d="M190 250q2-12 15-20L515 95q22-5 22 13v105q-5 15-22 25L210 372q-20 5-20-15z" fill="#73706d"/>
        <path d="M196 252q2-12 15-20L520 99" stroke="#c4c0bc"/>
        <path d="M214 270q5-35 30-38 22 2 18 40v30q-5 40-30 46-20-2-18-35z" fill="#625e5b"/><path d="M222 345q28-5 32-45v-45" stroke="#c4c0bc"/>
        <path d="M300 215l200-85M300 205l195-85M300 320l215-90M300 310l215-90" /><path d="M302 210l195-85M302 316l210-88" stroke="#c4c0bc"/>
        <g fill="url(#metal)"><path d="M302 250q10-16 22-5l20 9-12 32-26-14z"/><path d="M338 238q8-14 20-8l18 8-10 30-24-10z"/><path d="M370 222q8-14 20-8l18 8-8 30-24-10z"/><path d="M420 188q8-14 24-6l22 10-10 38-32-12z"/><path d="M472 168q8-12 24-4l20 10-8 36-32-12z"/></g>
        <g fill="#d0ccc7"><ellipse cx="338" cy="267" rx="12" ry="18"/><ellipse cx="372" cy="251" rx="11" ry="17"/><ellipse cx="403" cy="237" rx="11" ry="17"/><ellipse cx="460" cy="210" rx="14" ry="21"/><ellipse cx="510" cy="190" rx="14" ry="21"/></g>
        <g fill="#73706d"><ellipse cx="339" cy="268" rx="6" ry="10"/><ellipse cx="373" cy="252" rx="6" ry="10"/><ellipse cx="404" cy="238" rx="6" ry="10"/><ellipse cx="461" cy="211" rx="8" ry="13"/><ellipse cx="511" cy="191" rx="8" ry="13"/></g>
        <path d="M515 238l15-6 25 8v14z" fill="#eee"/>
        <!-- drum -->
        <path d="M862 68q38-33 88-30c100 12 175 132 172 242-2 70-20 105-60 128L830 518 660 160z" fill="#625e5b"/>
        <path d="M660 158L928 42l15 68-181 82-40-25z" fill="#8a8683"/>
        <path d="M762 190l53-17 57 19-77 36z" fill="#cfcbc6"/>
        <path d="M793 234l32-12 8 52-18-9z" fill="#fff" stroke="none"/>
        <path d="M826 278l140-65q20 5 16 27l-134 68z" fill="url(#metal)" stroke="none"/>
        <path d="M840 310l20 12 14 32-20 10z" fill="#c9cde8"/><path d="M857 360l78-30-20 55-57 30z" fill="#55514e"/>
        <path d="M858 416l184-84 40 48-30 25-225 112z" fill="#b0aca8"/>
        <path d="M558 235c7-55 42-80 102-77 100 17 195 132 192 242-2 70-37 130-77 148l-40-130-175-40q-12-70-2-143z" fill="#625e5b"/>
        <path d="M658 160l16 72M772 455l45 58" stroke-width="2"/>
        <path d="M775 318l325-148M785 316l40-20" stroke-width="1.500"/>
        <!-- drum support -->
        <path d="M583 310l-68 200-2 125q2 10 12 15l255 97q15 3 16-12l1-125-64-210-13-50-45-22z" fill="#625e5b"/>
        <path d="M552 298l35 12M672 330l50 20 12 62 8 8-10 40-60-30-10-30z" stroke-width="1.500"/><path d="M672 332l66 84"/>
        <path d="M590 305l22-8 58 30-18 22-62-34z" fill="#b9b5b1"/><path d="M600 325v60l30 15M640 350v30" />
        <path d="M625 385l18-28 22 8-8 40-20-4z" fill="url(#metal)"/><circle cx="633" cy="385" r="9" fill="#999"/>
        <ellipse cx="596" cy="443" rx="6" ry="8"/><circle cx="707" cy="428" r="5" fill="#222"/><ellipse cx="557" cy="603" rx="7" ry="10" fill="#064"/><ellipse cx="744" cy="676" rx="7" ry="10" fill="#064"/>
        <!-- chain guard -->
        <path d="M260 462l20-8 20 12 98 176q8 12-6 30l-30-20z" fill="#6b6764"/><circle cx="287" cy="476" r="7"/><circle cx="388" cy="645" r="7"/>
        <path d="M60 437l105-41q40 3 57 34l-85 40q-30-45-77-33z" fill="url(#bendtop)"/>
        <path d="M45 480c0-50 45-60 70-35q15 10 22 25l181 295c27 45 32 135-28 150-40 0-75-35-87-70L60 525q-12-20-15-45z" fill="#625e5b"/>
        <path d="M137 470l85-40q12-4 20 6l163 264 3 22-90 43z" fill="#aaa6a2"/>
        <path d="M138 472l180 293" stroke="#e4e0dc"/>
        <path d="M318 765l90-43q30 78-8 148l-98 42c48-32 43-102 16-147z" fill="url(#bend)"/>
      </g>
      <!-- orientation triad -->
      <g class="triad">
        <path d="M275 958l-14-6" stroke="#a01818" stroke-width="4"/><path d="M253 950l10-3-2 10z" fill="#a01818"/>
        <path d="M275 958l14-6" stroke="#1414a8" stroke-width="4"/><path d="M297 949l-11-2 4 9z" fill="#1414a8"/>
        <path d="M275 959v-22" stroke="#187018" stroke-width="4"/><path d="M275 930l4 10h-8z" fill="#4c994c" stroke="#145014"/>
        <text x="271" y="928" fill="#080">Y</text><text x="247" y="951" fill="#e00">X</text><text x="293" y="950" fill="#00f">Z</text>
      </g>
    </svg>
    <nav class="taskpane">
      <button class="on" aria-label="Resources"><svg><use href="#home"/></svg></button>
      <button aria-label="Design library"><svg><use href="#books"/></svg></button>
      <button aria-label="File explorer"><svg><use href="#dir"/></svg></button>
      <button aria-label="View palette"><svg><use href="#palette"/></svg></button>
      <button aria-label="Appearances, scenes"><svg><use href="#ball"/></svg></button>
      <button aria-label="Custom properties"><svg><use href="#props"/></svg></button>
      <button aria-label="Forum"><svg><use href="#chat"/></svg></button>
    </nav>
  </section>
</main>

<nav class="sheets">
  <div class="steps">
    <button aria-label="First"><svg viewBox="0 0 10 10"><path d="M2 1v8M9 1v8L4 5z"/></svg></button>
    <button aria-label="Previous"><svg viewBox="0 0 10 10"><path d="M7 1v8L2 5z"/></svg></button>
    <button aria-label="Next"><svg viewBox="0 0 10 10"><path d="M3 1v8l5-4z"/></svg></button>
    <button aria-label="Last"><svg viewBox="0 0 10 10"><path d="M8 1v8M1 1v8l5-4z"/></svg></button>
  </div>
  <button class="sheet on">Model</button><button class="sheet">3D Views</button><button class="sheet wide">Motion Study 1</button>
</nav>
<footer class="status">
  <span>SOLIDWORKS Premium 2020 SP0.0</span>
  <div class="right">
    <span class="ud">Under Defined</span><span class="las">Large Assembly Settings</span><span class="ea">Editing Assembly</span>
    <svg class="reb"><use href="#rebuild"/></svg>
    <button class="units">MMGS<svg viewBox="0 0 6 4"><path d="M0 4h6L3 0z" fill="#333"/></svg></button>
    <svg class="tg"><use href="#tag"/></svg>
  </div>
</footer>
</body>
</html>
```
FILE: styles.css
```css
* { box-sizing: border-box; }
body {
  margin: 0;
  min-height: 100vh;
  display: flex;
  flex-direction: column;
  background: #fff;
  color: #111;
  font: 11px/13px "Noto Sans", "Open Sans", sans-serif;
}
.defs { position: absolute; width: 0; height: 0; }
button {
  margin: 0;
  padding: 0;
  border: 0;
  background: none;
  color: inherit;
  font: inherit;
}
svg { display: block; flex: none; }
.car { width: 6px; height: 4px; color: #444; }

/* title bar */
.titlebar {
  display: flex;
  align-items: center;
  height: 31px;
  background: #e6e6e6;
  border-bottom: 1px solid #808080;
  position: relative;
}
.logo {
  align-self: flex-start;
  display: flex;
  align-items: center;
  gap: 3px;
  width: 145px;
  height: 35px;
  margin-left: 10px;
  padding: 0 4px;
  border: 1px solid #999;
  border-top: 0;
  background: linear-gradient(160deg, #fff 50%, #dcdcdc);
  z-index: 1;
}
.logo-mark { width: 30px; height: 28px; }
.logo-text { color: #dd2b1c; font: italic 300 17px/20px "Open Sans", "Noto Sans", sans-serif; padding-top: 4px; }
.logo-text b { font-weight: 700; }
.flyout {
  width: 21px;
  height: 30px;
  background: #f0f0f0;
  border-right: 1px solid #999;
  display: flex;
  align-items: center;
  justify-content: center;
}
.flyout svg { width: 7px; height: 12px; }
.qat { display: flex; align-items: center; gap: 6px; margin-left: 32px; }
.qat button { display: flex; align-items: center; }
.qat svg:first-child { width: 20px; height: 20px; }
.qat .drop { gap: 6px; width: 34px; }
.doc-title {
  position: absolute;
  left: 50%;
  top: 9px;
  width: 214px;
  margin: 0;
  font-size: 11px;
  font-weight: 400;
  text-align: center;
}
.search {
  display: flex;
  align-items: center;
  gap: 6px;
  width: 202px;
  height: 23px;
  margin-left: auto;
  padding: 0 4px 0 5px;
  border: 1px solid #111;
  background: #eeeef4;
}
.prompt { width: 15px; height: 15px; }
.search input {
  flex: 1;
  min-width: 0;
  padding: 0;
  border: 0;
  background: none;
  font: inherit;
}
.search input::placeholder { color: #666; opacity: 1; }
.search button { display: flex; align-items: center; gap: 6px; }
.search button svg:first-child { width: 18px; height: 18px; }
.winbtns { display: flex; align-items: center; padding-left: 4px; }
.winbtns button { width: 26px; display: flex; justify-content: center; color: #444; }
.winbtns button svg { width: 18px; height: 18px; }
.winbtns .tiny { width: 13px; }
.winbtns .tiny svg { width: 6px; height: 4px; }
.winbtns button svg.w { width: 14px; height: 14px; }
.winbtns .help { font-size: 17px; font-weight: 700; line-height: 20px; }

/* command ribbon */
.ribbon {
  display: flex;
  height: 87px;
  padding: 6px 0 2px;
  background: #f7f7f7;
  border-bottom: 1px solid #808080;
}
.group { display: grid; border-right: 1px solid #bdbdbd; }
.g1 { grid-template-columns: 50px; }
.g2 { grid-template-columns: 74px 66px 64px 54px 50px 62px 62px 46px 76px 74px; }
.g3 { grid-template-columns: 62px 56px 58px; }
.g4 { grid-template-columns: 70px 74px; }
.g5 { grid-template-columns: 86px 98px 60px 102px 54px 106px; border-right: 0; }
.group button {
  display: flex;
  flex-direction: column;
  align-items: center;
  justify-content: flex-start;
  padding-top: 12px;
  white-space: nowrap;
}
.group button.tall { padding-top: 5px; }
.group button svg:first-child { width: 20px; height: 20px; }
.group span { margin-top: 1px; }
.group .car { margin-top: 13px; }
.group button:disabled { color: #b4b4b4; }

/* command tabs and view toolbar */
.tabrow { display: flex; align-items: flex-start; height: 22px; position: relative; z-index: 2; }
.tabs { display: flex; height: 22px; border-right: 1px solid #808080; }
.tabs button {
  padding: 0 8px;
  height: 22px;
  border-left: 1px solid #808080;
  border-bottom: 1px solid #808080;
  background: #d2d2d2;
  color: #333;
}
.tabs button:nth-child(1) { width: 67px; border-left: 0; }
.tabs button:nth-child(2), .tabs button:nth-child(3) { width: 56px; }
.tabs button:nth-child(4) { width: 57px; }
.tabs button:nth-child(5) { width: 62px; padding: 0; }
.tabs button:nth-child(6) { width: 133px; }
.tabs button:nth-child(7) { width: 56px; }
.tabs .on { background: #f7f7f7; font-weight: 700; border-bottom-color: #f7f7f7; }
.hud { display: flex; align-items: center; gap: 6px; height: 27px; margin: 1px 0 0 386px; }
.hud button { display: flex; align-items: center; }
.hud button > svg:first-child { width: 20px; height: 20px; }
.hud .car { color: #888; }
.hud .drop { gap: 6px; width: 34px; }
.hud .pressed { width: 39px; height: 26px; margin: 0 -2px 0 -4px; border: 1px solid #909090; background: #b8b8b8; padding-left: 2px; gap: 3px; }
.pressed span { display: flex; align-items: center; justify-content: center; flex: 1; height: 24px; background: #f7f7f7; }
.docbtns { display: flex; gap: 12px; margin: 8px 12px 0 auto; color: #a8a8a8; }
.docbtns svg { width: 14px; height: 14px; }

/* workspace */
.work { flex: 1; display: flex; min-height: 0; }
.panel {
  position: relative;
  display: flex;
  flex-direction: column;
  width: 234px;
  background: #f7f7f7;
  border-right: 1px solid #8a8a8a;
  border-left: 1px solid #c4c4c4;
}
.panel-top { height: 5px; margin-right: 2px; border: 1px solid #bcbcbc; border-top-color: #a9c4c6; }
.grip { display: flex; align-items: center; justify-content: center; height: 15px; margin-right: 4px; border-bottom: 1px solid #c8c8c8; }
.grip i, .splitter i { width: 6px; height: 6px; border: 1px solid #999; border-radius: 50%; background: #ddd; }
.ptabs { display: flex; height: 26px; margin: 4px 2px 0 1px; }
.ptabs button {
  display: flex;
  align-items: center;
  justify-content: center;
  width: 40px;
  border: 1px solid #8c8c8c;
  border-left: 0;
  background: #d2d2d2;
}
.ptabs .on { background: #f7f7f7; border-bottom-color: #f7f7f7; }
.ptabs .more { flex: 1; background: none; border: 0; border-bottom: 1px solid #bcbcbc; padding-left: 8px; }
.ptabs svg { width: 20px; height: 20px; }
.ptabs .more svg { width: 8px; height: 12px; }
.filter { display: flex; align-items: center; gap: 1px; height: 26px; margin: 0 4px; padding: 0 2px; border: 1px solid #bcbcbc; }
.filter svg:first-child { width: 18px; height: 18px; }
.filter .car { margin-top: 8px; }
.tree { margin: 0 2px 0 0; padding: 0; list-style: none; overflow: hidden; }
.tree li { display: flex; align-items: center; height: 22px; white-space: nowrap; }
.tree .ex { flex: none; width: 5px; height: 8px; margin: 0 12px 0 9px; }
.tree .ic { width: 19px; height: 19px; margin-right: 4px; }
.tree .root .ic { margin: 0 3px 0 4px; }
.rollback { height: 3px; margin-right: 2px; background: #348cc8; }
.hscroll { display: flex; height: 16px; margin: auto 2px 0 0; background: #eee; }
.hscroll button { display: flex; align-items: center; justify-content: center; width: 17px; }
.hscroll svg { width: 8px; height: 12px; }
.track { flex: 1; }
.thumb { width: 56%; height: 16px; background: #cbcbcb; }
.panel-end { height: 4px; margin: 1px 2px 0 0; border-top: 1px solid #bcbcbc; border-bottom: 1px solid #bcbcbc; }
.splitter {
  position: absolute;
  top: 407px;
  left: 232px;
  width: 9px;
  height: 39px;
  display: flex;
  align-items: center;
  justify-content: center;
  border: 1px solid #8a8a8a;
  border-left: 0;
  background: #f7f7f7;
  z-index: 1;
}
.view { position: relative; flex: 1; min-width: 0; overflow: hidden; }
.scene { width: 100%; height: auto; }
.cad { fill: none; stroke: #000; stroke-width: 1; }
.cad * { vector-effect: non-scaling-stroke; }
.triad text { font: 12px "Liberation Sans", sans-serif; }
.taskpane {
  position: absolute;
  top: 53px;
  right: 0;
  display: flex;
  flex-direction: column;
  width: 26px;
  border: 1px solid #8a8a8a;
  border-right: 0;
}
.taskpane button { display: flex; align-items: center; justify-content: center; height: 24px; background: #d2d2d2; border-bottom: 1px solid #8a8a8a; }
.taskpane button:last-child { border-bottom: 0; }
.taskpane .on { background: #f7f7f7; }
.taskpane svg { width: 19px; height: 19px; }

/* sheet tabs */
.sheets { display: flex; height: 16px; padding-left: 27px; background: #f7f7f7; border-top: 1px solid #8a8a8a; border-bottom: 1px solid #8a8a8a; }
.steps { display: flex; width: 65px; background: #b0b0b0; border-top: 1px solid #222; }
.steps button { flex: 1; border: 1px solid #888; border-left-color: #ccc; display: flex; align-items: center; justify-content: center; }
.steps svg { width: 9px; height: 9px; fill: #8a8a8a; stroke: #8a8a8a; }
.sheet { display: flex; justify-content: center; width: 69px; border-right: 1px solid #8a8a8a; background: #d2d2d2; line-height: 12px; }
.sheet.on { width: 57px; padding-left: 2px; background: #f7f7f7; font-weight: 700; }
.sheet.wide { width: 108px; padding-right: 8px; }

/* status bar */
.status {
  display: flex;
  align-items: center;
  height: 21px;
  padding-left: 1px;
  background: #e6e6e6;
  border-bottom: 2px solid #1d2f3f;
}
.right { display: flex; align-items: center; margin-left: auto; }
.ud { width: 86px; }
.las { width: 138px; }
.ea { width: 120px; }
.reb { width: 17px; height: 17px; }
.units { display: flex; align-items: center; gap: 20px; margin: 0 26px 0 73px; }
.units svg { width: 6px; height: 4px; }
.tg { width: 17px; height: 17px; margin-right: 2px; }
```
